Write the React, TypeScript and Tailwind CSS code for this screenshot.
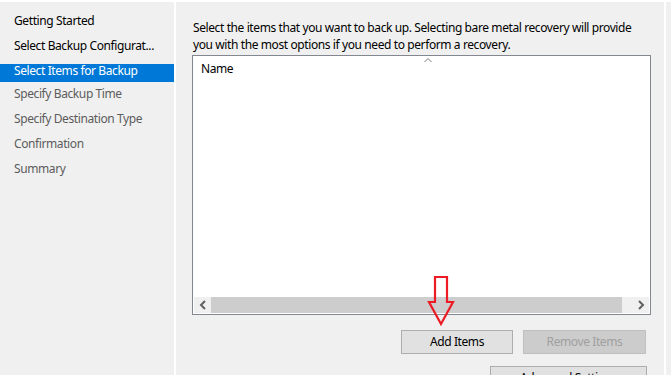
import React from 'react';

// Windows Server Backup wizard – "Select Items for Backup" page

const steps = [
  { label: 'Getting Started', state: 'done' },
  { label: 'Select Backup Configurat...', state: 'done' },
  { label: 'Select Items for Backup', state: 'active' },
  { label: 'Specify Backup Time', state: 'todo' },
  { label: 'Specify Destination Type', state: 'todo' },
  { label: 'Confirmation', state: 'todo' },
  { label: 'Summary', state: 'todo' },
];

const font = { fontFamily: '"Noto Sans", "Segoe UI", sans-serif' };

const Chevron: React.FC<{ dir: 'left' | 'right' }> = ({ dir }) => (
  <svg width="8" height="10" viewBox="0 0 8 10">
    <path
      d={dir === 'left' ? 'M6 1 L2 5 L6 9' : 'M2 1 L6 5 L2 9'}
      fill="none"
      stroke="#606060"
      strokeWidth="2"
    />
  </svg>
);

const App: React.FC = () => {
  return (
    <div
      className="relative w-[671px] h-[375px] overflow-hidden bg-white pt-[2px] flex gap-[2px] text-[12px] tracking-[-0.4px] text-black"
      style={font}
    >
      {/* Steps sidebar */}
      <aside className="w-[174px] shrink-0 bg-[#f0f0f0] pt-[11px]">
        {steps.map((s, i) => {
          const next = steps[i + 1];
          if (s.state === 'active') {
            return (
              <div
                key={s.label}
                className="h-[18px] leading-[14px] pl-[14px] bg-[#0078d7] text-white mb-[4px]"
              >
                {s.label}
              </div>
            );
          }
          return (
            <div
              key={s.label}
              className={`h-[16px] leading-[16px] pl-[14px] ${
                next && next.state === 'active' ? 'mb-[10px]' : 'mb-[9px]'
              } ${s.state === 'todo' ? 'text-[#5c5c5c]' : 'text-black'}`}
            >
              {s.label}
            </div>
          );
        })}
      </aside>

      {/* Main page */}
      <main className="w-[488px] shrink-0 bg-[#f0f0f0] pl-[16px] pt-[17px] flex flex-col">
        <p className="leading-[17px] pl-[1px] w-[459px]">
          Select the items that you want to back up. Selecting bare metal recovery will provide
          you with the most options if you need to perform a recovery.
        </p>

        {/* List view */}
        <div className="relative shrink-0 mt-[2px] w-[459px] h-[260px] border border-[#828790] bg-white p-[1px] flex flex-col">
          <svg
            className="absolute left-[231px] top-[1px]"
            width="8"
            height="6"
            viewBox="0 0 8 6"
          >
            <path d="M0.5 5 L4 1.5 L7.5 5" fill="none" stroke="#7a7a7a" strokeWidth="1" />
          </svg>
          <div className="pl-[7px] pt-[4px] leading-[16px]">Name</div>
          <div className="flex-1" />
          {/* Horizontal scrollbar */}
          <div className="h-[16px] bg-[#f0f0f0] flex items-stretch">
            <div className="w-[17px] flex items-center justify-center">
              <Chevron dir="left" />
            </div>
            <div className="w-[411px] bg-[#cdcdcd]" />
            <div className="flex-1" />
            <div className="w-[17px] flex items-center justify-center">
              <Chevron dir="right" />
            </div>
          </div>
        </div>

        <div className="shrink-0 mt-[15px] w-[454px] flex justify-end gap-[10px]">
          <button className="w-[112px] h-[24px] bg-[#e1e1e1] border border-[#adadad] text-black">
            Add Items
          </button>
          <button className="w-[123px] h-[24px] bg-[#cccccc] border border-[#bfbfbf] text-[#a0a0a0]">
            Remove Items
          </button>
        </div>
        <div className="shrink-0 mt-[12px] w-[455px] flex justify-end">
          <button className="w-[157px] h-[24px] bg-[#e1e1e1] border border-[#adadad] text-black">
            Advanced Settings
          </button>
        </div>
      </main>

      <div className="flex-1 bg-[#f0f0f0]" />

      {/* Red annotation arrow */}
      <svg
        className="absolute left-[426px] top-[274px]"
        width="30"
        height="54"
        viewBox="0 0 30 54"
      >
        <path
          d="M9 3 H21 V28 H27 L15 50 L3 28 H9 Z"
          fill="none"
          stroke="#ed1c24"
          strokeWidth="2.2"
          strokeLinejoin="miter"
        />
      </svg>
    </div>
  );
};

export default App;
